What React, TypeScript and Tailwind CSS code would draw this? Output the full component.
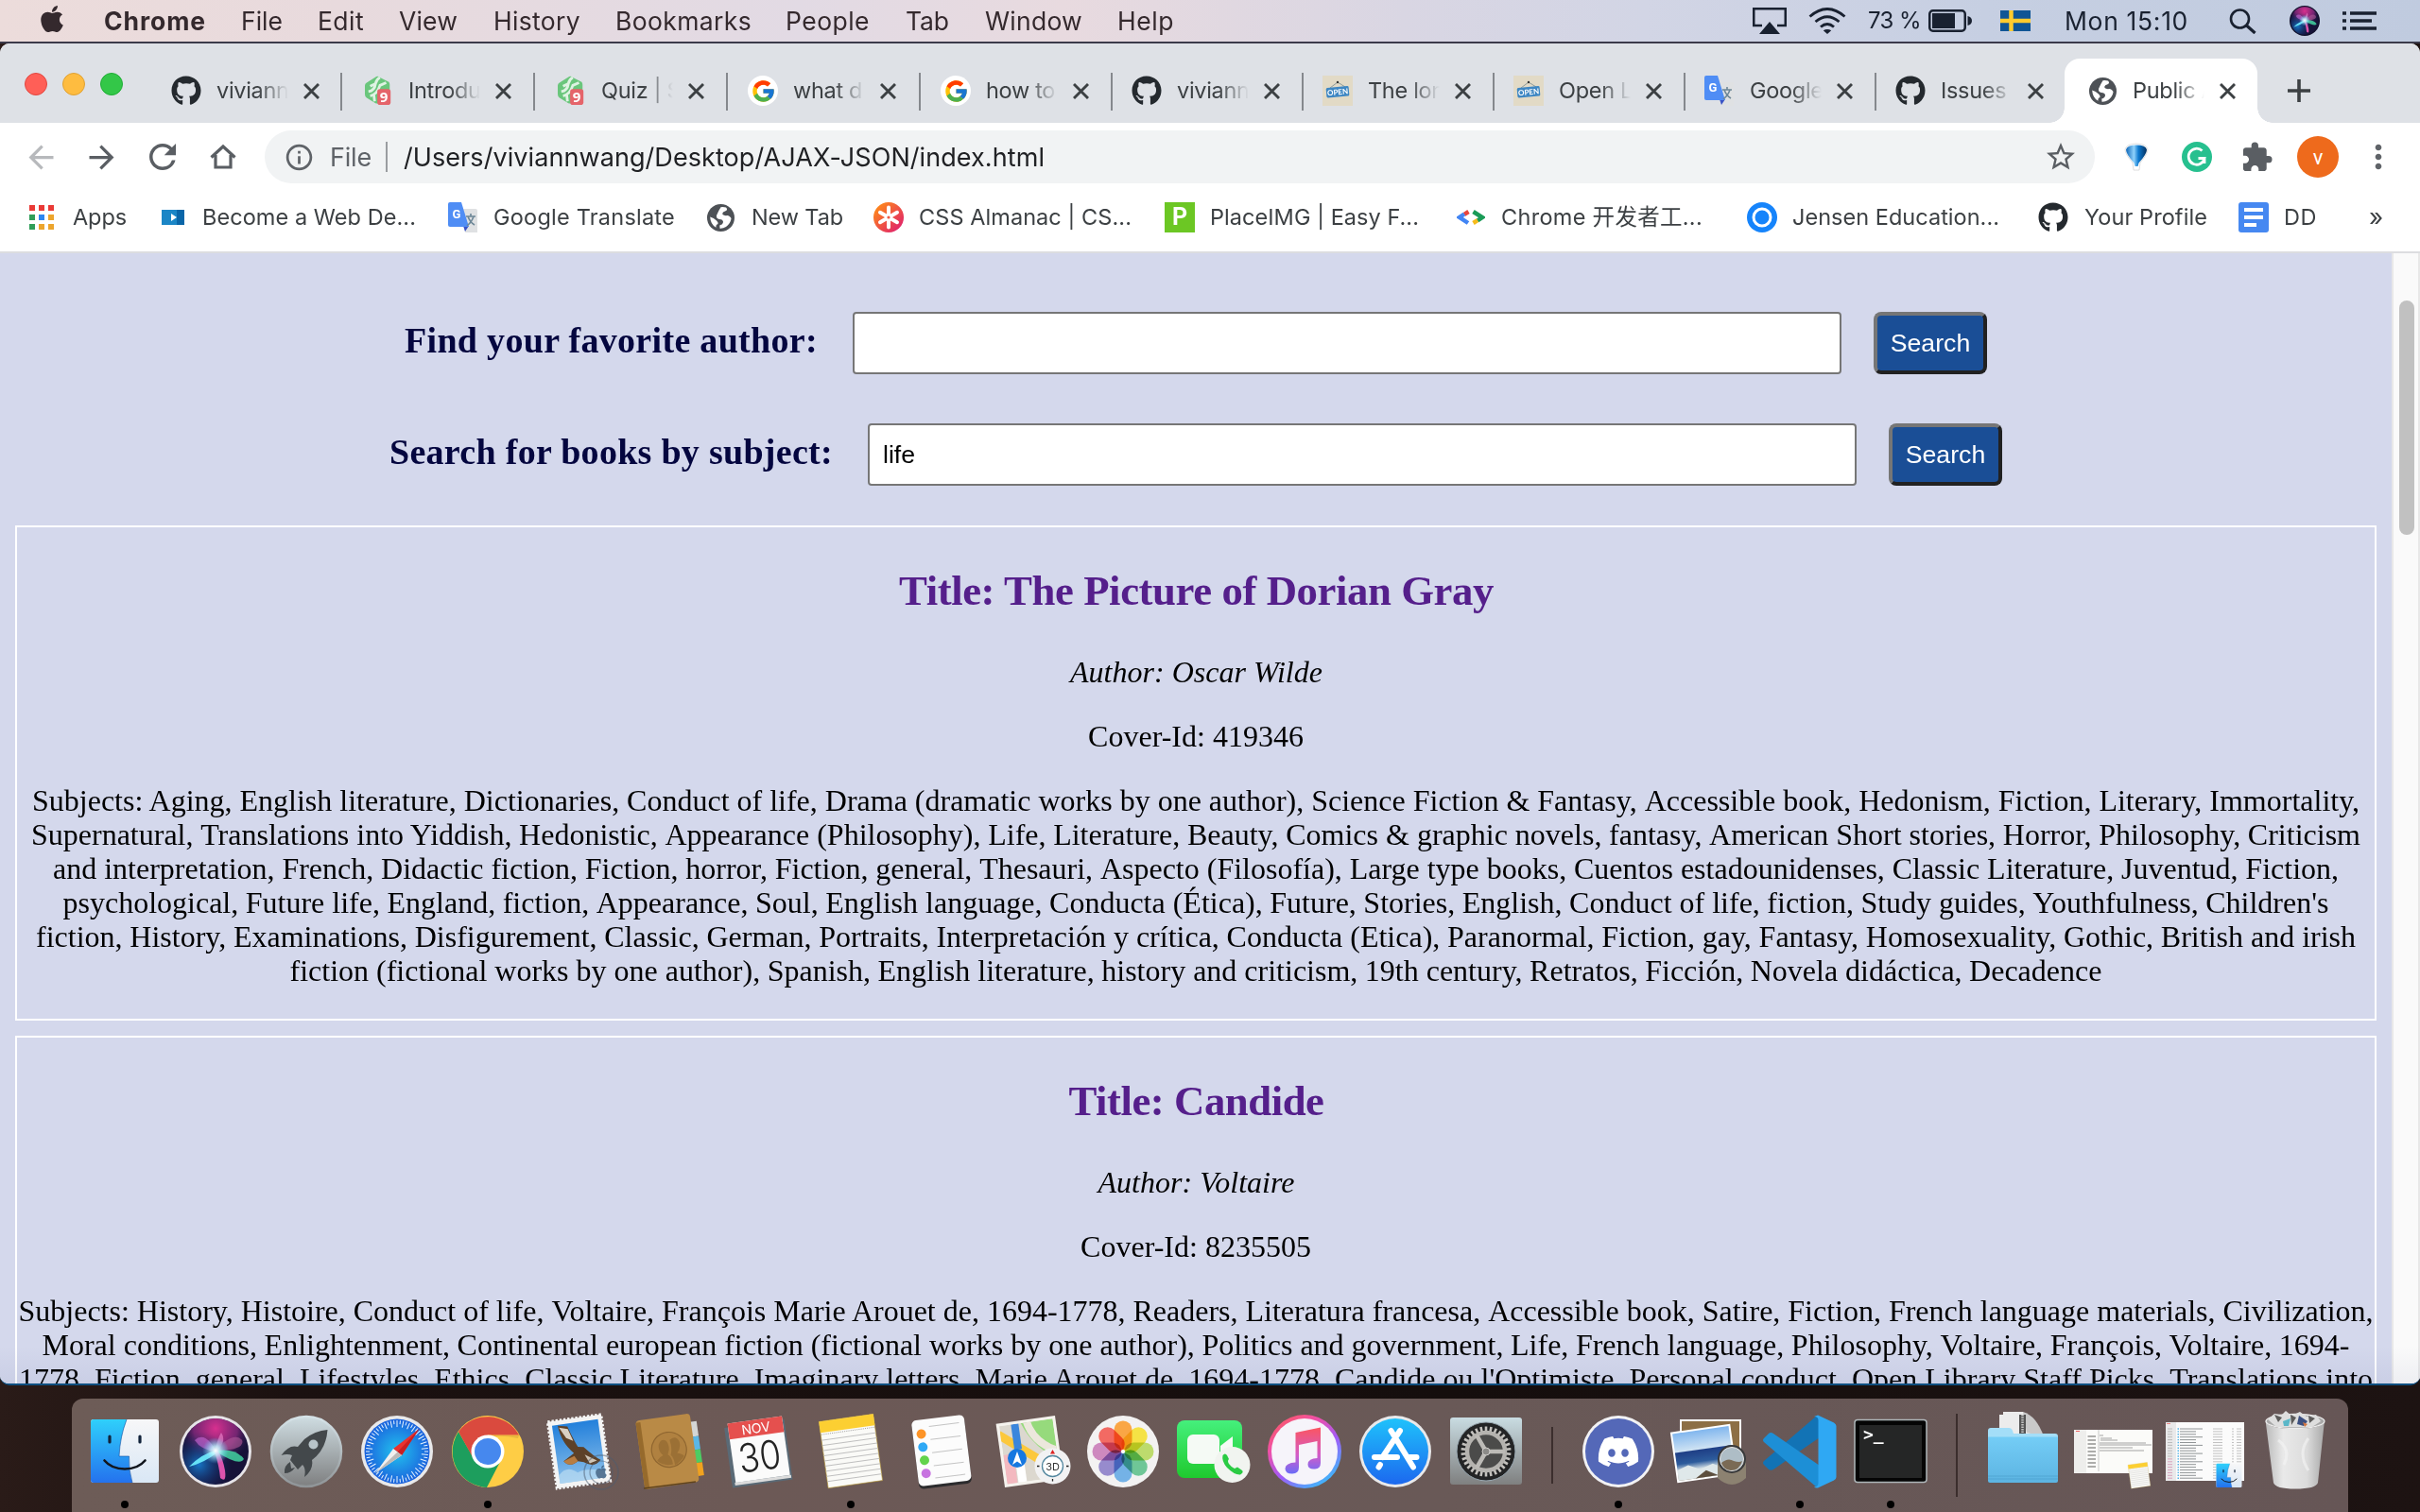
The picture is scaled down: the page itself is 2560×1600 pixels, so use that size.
import React, { useLayoutEffect, useRef } from "react";
import { FaApple, FaDiscord, FaGithub } from "react-icons/fa";
import { FcGoogle } from "react-icons/fc";
import {
  MdArrowBack,
  MdArrowForward,
  MdExtension,
  MdInfoOutline,
  MdMoreVert,
  MdRefresh,
  MdStarBorder,
} from "react-icons/md";

/* Text whose tracking adapts so that it fills the width of its box. */
function Fit({ className = "", children }: { className?: string; children: string }) {
  const outer = useRef<HTMLSpanElement>(null);
  const inner = useRef<HTMLSpanElement>(null);
  useLayoutEffect(() => {
    const o = outer.current;
    const i = inner.current;
    if (!o || !i) return;
    i.style.letterSpacing = "0px";
    const room = o.getBoundingClientRect().width + 1 - i.getBoundingClientRect().width;
    i.style.letterSpacing = `${room / children.length}px`;
  }, [children]);
  return (
    <span ref={outer} className={`block shrink-0 whitespace-nowrap ${className}`}>
      <span ref={inner} className="inline-block">
        {children}
      </span>
    </span>
  );
}

/* One justified line of subjects; only the spaces after commas stretch. */
function SubjectLine({ className, text }: { className: string; text: string }) {
  const outer = useRef<HTMLDivElement>(null);
  const inner = useRef<HTMLSpanElement>(null);
  const parts = text.split(", ");
  useLayoutEffect(() => {
    const o = outer.current;
    const i = inner.current;
    if (!o || !i) return;
    const gaps = i.querySelectorAll<HTMLElement>("[data-gap]");
    let spacing = -1;
    for (let pass = 0; pass < 3; pass++) {
      gaps.forEach((g) => (g.style.wordSpacing = `${spacing}px`));
      const room = o.getBoundingClientRect().width - i.getBoundingClientRect().width;
      spacing += room / gaps.length;
    }
    gaps.forEach((g) => (g.style.wordSpacing = `${spacing}px`));
  }, [text]);
  return (
    <div ref={outer} className={`mx-auto h-9 whitespace-nowrap text-left ${className}`}>
      <span ref={inner} className="inline-block">
        {parts.map((p, k) => (
          <React.Fragment key={k}>
            {p}
            {k < parts.length - 1 && (
              <>
                ,<span data-gap="">{" "}</span>
              </>
            )}
          </React.Fragment>
        ))}
      </span>
    </div>
  );
}

/* ---------- small icons ---------- */

const OctoIcon = () => <FaGithub className="size-8 text-[#24292e]" />;
const GoogleIcon = () => (
  <span className="flex size-8 items-center justify-center rounded-full bg-white">
    <FcGoogle className="size-[27px]" />
  </span>
);
const GlobeIcon = () => (
  <svg viewBox="0 0 29 29" className="size-[29px]">
    <circle cx="14.500" cy="14.500" r="14.500" fill="#4d5156" />
    <path
      d="M20 3.500 Q22.500 6 19 7.500 Q15.500 8.500 16.500 11 Q18 12.500 21.500 12 Q25 13 25.500 15.500 Q24.500 21 20 24 Q17 26 13.500 25.800 L13.300 22.500 Q17 21.500 17 18.500 Q16.500 16 13 16 Q9.500 15.500 10 12 Q12 7 14.500 3.200 Q17 2.800 20 3.500Z"
      fill="#fff"
    />
    <path d="M3.200 13.500 Q7 14.500 10 17.500 Q12 19 11.500 21 Q9 21.500 9.500 24.700 Q3.500 21.500 3.200 13.500Z" fill="#fff" />
  </svg>
);

const TreehouseIcon = () => (
  <svg viewBox="0 0 32 32" className="ml-0.5 size-8">
    <path d="M13 0 Q15 -1 17 1 L27 6 Q28 7 28 9 V22 L16 30 Q14 31 12 30 L2 24 Q0 23 0 20 V10 Q0 8 2 7Z" fill="#6ac67c" />
    <path d="M4 17 Q11 16 12 8 Q13 3 17 1 M6 22 Q14 20 17 10 L24 7 M12 8 L6 11 M10 20 L11 28" stroke="#dff3e3" strokeWidth="3" fill="none" />
    <rect x="14" y="14" width="15" height="18" rx="3" fill="#e5646a" />
    <text x="21.5" y="28.500" fontSize="16" fontWeight="700" fill="#fff" textAnchor="middle" fontFamily="Open Sans, sans-serif">9</text>
  </svg>
);

const OpenIcon = () => (
  <svg viewBox="0 0 32 32" className="size-8">
    <rect width="32" height="32" fill="#e2dac6" />
    <path d="M8 13 L16 7 L24 12" stroke="#8b9a9a" fill="none" />
    <circle cx="16" cy="7" r="1.2" fill="#333" />
    <g transform="rotate(-5 16 17)">
      <rect x="4" y="12" width="24" height="10.5" rx="1.5" fill="#3e87c3" />
      <text x="16" y="20.3" fontSize="8" fontWeight="700" fill="#fff" textAnchor="middle" fontFamily="Lato, sans-serif">OPEN</text>
    </g>
  </svg>
);

const TranslateIcon = () => (
  <svg viewBox="0 0 32 32" className="size-8">
    <path d="M14 7 H29 Q31 7 31 9 V32 H18Z" fill="#dfe1e3" />
    <path d="M16 25 H22 L18 31Z" fill="#3a53c5" />
    <path d="M2 0 H14 L22 26 H2 Q0 26 0 24 V2 Q0 0 2 0Z" fill="#4f8df5" />
    <text x="9" y="17" fontSize="13" fontWeight="700" fill="#fff" textAnchor="middle" fontFamily="Roboto, sans-serif">G</text>
    <path d="M19 15 H29 M24 12 V15 M21 15 Q23 21 28 24 M27 15 Q25 21 20 25" stroke="#6d8797" strokeWidth="1.6" fill="none" />
  </svg>
);

const AppsIcon = () => (
  <div className="grid size-[26px] grid-cols-3 grid-rows-3 gap-1">
    <i className="bg-[#ea3a36]" /><i className="bg-[#ea3a36]" /><i className="bg-[#ea3a36]" />
    <i className="bg-[#2f9e58]" /><i className="bg-[#2d86f0]" /><i className="bg-[#eca52d]" />
    <i className="bg-[#2f9e58]" /><i className="bg-[#eca52d]" /><i className="bg-[#eca52d]" />
  </div>
);

const WebDevIcon = () => (
  <svg viewBox="0 0 24 16" className="h-4 w-6">
    <rect width="24" height="16" fill="#0a66a8" />
    <rect width="16" height="16" fill="#1b86c6" />
    <path d="M10 4 L16 8 L10 12Z" fill="#fff" />
  </svg>
);

const AlmanacIcon = () => (
  <svg viewBox="0 0 32 32" className="size-8">
    <defs>
      <linearGradient id="alm" x1="0" y1="0" x2="1" y2="1">
        <stop offset="0.1" stopColor="#ff8a18" />
        <stop offset="0.9" stopColor="#e0226c" />
      </linearGradient>
    </defs>
    <circle cx="16" cy="16" r="16" fill="url(#alm)" />
    <path d="M16 5.500 V26.500 M7 10.800 L25 21.200 M25 10.800 L7 21.200" stroke="#fff" strokeWidth="4" strokeLinecap="round" />
    <circle cx="16" cy="16" r="1.600" fill="#ef5a44" />
  </svg>
);

const PlaceIcon = () => (
  <div className="flex size-8 items-center justify-center bg-[#6cc724] font-[Roboto] text-[25px] font-bold leading-8 text-white">P</div>
);

const DevtoolsIcon = () => (
  <svg viewBox="0 0 30 16" className="h-4 w-[30px]">
    <path d="M12.500 2 L8 4.800" stroke="#e8453c" strokeWidth="4.500" />
    <path d="M8 4.500 L3 8 L12 14" fill="none" stroke="#4285f4" strokeWidth="4.500" />
    <path d="M17.500 2 L27 8 L22 11.500" fill="none" stroke="#1a9b57" strokeWidth="4.500" />
    <path d="M22 11.200 L17.500 14" stroke="#f5bb1b" strokeWidth="4.500" />
  </svg>
);

const RingIcon = () => (
  <svg viewBox="0 0 32 32" className="size-8">
    <circle cx="16" cy="16" r="16" fill="#1684fb" />
    <circle cx="16" cy="16" r="9" fill="none" stroke="#fff" strokeWidth="3" />
  </svg>
);

const DocIcon = () => (
  <svg viewBox="0 0 32 32" className="size-8">
    <rect width="32" height="32" rx="3" fill="#4688f1" />
    <path d="M6 8 H26 M6 16 H26 M6 24 H19" stroke="#fff" strokeWidth="4" />
  </svg>
);

const SiriArt = ({ id }: { id: string }) => (
  <>
    <defs>
      <radialGradient id={`${id}a`} cx="0.5" cy="0.15" r="0.55">
        <stop offset="0" stopColor="#d8308f" />
        <stop offset="0.6" stopColor="#8b2a80" stopOpacity="0.8" />
        <stop offset="1" stopColor="#2a1a50" stopOpacity="0" />
      </radialGradient>
      <radialGradient id={`${id}b`} cx="0.25" cy="0.7" r="0.5">
        <stop offset="0" stopColor="#1673c4" />
        <stop offset="1" stopColor="#14205a" stopOpacity="0" />
      </radialGradient>
      <radialGradient id={`${id}c`}>
        <stop offset="0" stopColor="#fff" />
        <stop offset="0.35" stopColor="#bff6ff" stopOpacity="0.8" />
        <stop offset="1" stopColor="#5ad0ff" stopOpacity="0" />
      </radialGradient>
    </defs>
    <circle cx="48" cy="48" r="35" fill="#161238" />
    <circle cx="48" cy="48" r="35" fill={`url(#${id}a)`} />
    <circle cx="48" cy="48" r="35" fill={`url(#${id}b)`} />
    <path d="M48 46 Q36 26 26 36 Q32 46 48 48Z" fill="#d46fe0" opacity="0.55" />
    <path d="M48 46 Q50 34 54 28 Q60 36 50 48Z" fill="#f08ad0" opacity="0.6" />
    <path d="M48 46 Q68 26 76 36 Q80 46 48 48Z" fill="#b05a9a" opacity="0.6" />
    <path d="M48 47 Q34 50 20 64 Q36 60 50 49Z" fill="#6ff0ff" opacity="0.9" />
    <path d="M48 47 Q70 44 78 56 Q74 64 50 49Z" fill="#45e0a8" opacity="0.8" />
    <path d="M47 48 Q52 64 53 76 Q60 82 58 68 Q56 56 50 46Z" fill="#f25ab8" opacity="0.9" />
    <circle cx="48" cy="47" r="14" fill={`url(#${id}c)`} />
  </>
);

/* ---------- menu bar ---------- */

function MenuBar() {
  return (
    <div className="flex h-11 items-center bg-[linear-gradient(90deg,#ecdcdb_0%,#e8dadd_14%,#e2dae4_33%,#e8dadf_44%,#d9d6e3_58%,#d2d5e5_68%,#c6cfe2_82%,#c0cbdf_100%)] text-[26.500px] leading-[44px] text-[#34292d]">
      <FaApple className="mb-1 ml-[40px] h-8 w-[30px] shrink-0" />
      <Fit className="ml-[40px] w-[107px] font-bold">Chrome</Fit>
      <Fit className="ml-[38px] w-[43px]">File</Fit>
      <Fit className="ml-[38px] w-[48px]">Edit</Fit>
      <Fit className="ml-[38px] w-[61px]">View</Fit>
      <Fit className="ml-[39px] w-[91px]">History</Fit>
      <Fit className="ml-[38px] w-[143px]">Bookmarks</Fit>
      <Fit className="ml-[37px] w-[88px]">People</Fit>
      <Fit className="ml-[39px] w-[45px]">Tab</Fit>
      <Fit className="ml-[39px] w-[102px]">Window</Fit>
      <Fit className="ml-[38px] w-[59px]">Help</Fit>
      <div className="ml-auto flex h-full shrink-0 items-center pr-[46px] text-[#192130]">
        <svg viewBox="0 0 36 28" className="h-7 w-9">
          <path d="M10 19 H1.250 V1.250 H34.750 V19 H26" fill="none" stroke="currentColor" strokeWidth="2.500" />
          <path d="M18 15 L29 28 H7Z" fill="currentColor" />
        </svg>
        <svg viewBox="0 0 40 28" className="ml-[23px] h-7 w-10" fill="none" stroke="currentColor" strokeWidth="2.900">
          <path d="M1.500 9.500 Q20 -6.500 38.500 9.500" />
          <path d="M7.500 15 Q20 4.500 32.500 15" />
          <path d="M13 20.500 Q20 14.500 27 20.500" />
          <path d="M20 28 L15.800 24.300 Q20 21.600 24.200 24.300Z" fill="currentColor" stroke="none" />
        </svg>
        <Fit className="ml-[23px] w-[55px] text-[24px]">73 %</Fit>
        <svg viewBox="0 0 46 24" className="ml-[9px] h-6 w-[46px]">
          <rect x="1.250" y="1.250" width="37.500" height="21.500" rx="3.500" fill="none" stroke="currentColor" strokeWidth="2.500" />
          <rect x="4" y="4" width="24" height="16" fill="currentColor" />
          <path d="M41.500 7 Q46 8 46 12 Q46 16 41.500 17Z" fill="currentColor" />
        </svg>
        <svg viewBox="0 0 32 22" className="ml-[30px] h-[22px] w-8">
          <rect width="32" height="22" fill="#0f5595" />
          <path d="M11.500 0 V22 M0 11 H32" stroke="#fecb2e" strokeWidth="4.500" />
        </svg>
        <Fit className="ml-[36px] w-[130px]">Mon 15:10</Fit>
        <svg viewBox="0 0 29 27" className="ml-[44px] h-[27px] w-[29px]" fill="none" stroke="currentColor" strokeWidth="2.600">
          <circle cx="11.500" cy="11" r="9.500" />
          <path d="M18 17.500 L27.500 26" strokeWidth="3.200" />
        </svg>
        <svg viewBox="10 10 76 76" className="ml-[35px] size-8">
          <circle cx="48" cy="48" r="38" fill="#10102a" />
          <SiriArt id="sm" />
        </svg>
        <svg viewBox="0 0 36 20" className="ml-[24px] h-5 w-9" stroke="currentColor" strokeWidth="3.600">
          <path d="M0 2 H4 M8 2 H36 M0 10 H4 M8 10 H31 M0 18 H4 M8 18 H36" />
        </svg>
      </div>
    </div>
  );
}

/* ---------- browser chrome ---------- */

const CloseX = () => (
  <svg viewBox="0 0 17 17" className="size-[17px] shrink-0" stroke="#3c4043" strokeWidth="2.900">
    <path d="M1 1 L16 16 M16 1 L1 16" />
  </svg>
);

function TabContent({ icon, label }: { icon: React.ReactNode; label: string }) {
  return (
    <>
      <span className="flex w-8 shrink-0 justify-center">{icon}</span>
      <span className="ml-4 w-[76px] shrink-0 overflow-hidden whitespace-nowrap tracking-[-0.300px] [mask-image:linear-gradient(to_right,black_58%,transparent)]">
        {label}
      </span>
      <span className="ml-[16px]">
        <CloseX />
      </span>
    </>
  );
}

const tabs: { icon: React.ReactNode; label: string; w: string }[] = [
  { icon: <OctoIcon />, label: "vivianna", w: "w-[205px] pl-[24px]" },
  { icon: <TreehouseIcon />, label: "Introdu", w: "w-[204px] pl-[22px]" },
  { icon: <TreehouseIcon />, label: "Quiz | S", w: "w-[204px] pl-[22px]" },
  { icon: <GoogleIcon />, label: "what d", w: "w-[204px] pl-[21px]" },
  { icon: <GoogleIcon />, label: "how to", w: "w-[203px] pl-[21px]" },
  { icon: <OctoIcon />, label: "vivianna", w: "w-[202px] pl-[20px]" },
  { icon: <OpenIcon />, label: "The lon", w: "w-[202px] pl-[20px]" },
  { icon: <OpenIcon />, label: "Open Li", w: "w-[202px] pl-[20px]" },
  { icon: <TranslateIcon />, label: "Google", w: "w-[202px] pl-[20px]" },
];

function TabStrip() {
  return (
    <div className="flex h-[84px] items-end bg-[#dee1e6] text-[23.500px] text-[#3c4043]">
      <div className="mb-[29px] ml-[26px] flex w-[131px] shrink-0 gap-4">
        <i className="size-6 rounded-full border border-[#e2463f] bg-[#ff5f57]" />
        <i className="size-6 rounded-full border border-[#dfa133] bg-[#febc40]" />
        <i className="size-6 rounded-full border border-[#1fae35] bg-[#33c748]" />
      </div>
      {tabs.map((t, i) => (
        <div key={i} className={`flex h-[68px] shrink-0 items-center ${t.w}`}>
          <TabContent icon={t.icon} label={t.label} />
          <i className="ml-auto mb-[-2px] h-10 w-0.5 bg-[#85888d]" />
        </div>
      ))}
      <div className="flex h-[68px] w-[199px] shrink-0 items-center pl-[20px]">
        <TabContent icon={<OctoIcon />} label="Issues ·" />
      </div>
      <div className="relative flex h-[68px] w-[204px] shrink-0 items-center rounded-t-2xl bg-white pl-[24px]">
        <i className="absolute -left-4 bottom-0 size-4 bg-[radial-gradient(circle_at_0_0,#dee1e6_15.500px,#fff_16px)]" />
        <i className="absolute -right-4 bottom-0 size-4 bg-[radial-gradient(circle_at_100%_0,#dee1e6_15.500px,#fff_16px)]" />
        <TabContent icon={<GlobeIcon />} label="Public A" />
      </div>
      <svg viewBox="0 0 24 24" className="mb-[22px] ml-[32px] size-6 shrink-0" stroke="#3c4043" strokeWidth="3.600">
        <path d="M12 0 V24 M0 12 H24" />
      </svg>
    </div>
  );
}

function Toolbar() {
  return (
    <div className="flex h-[72px] items-center bg-white text-[#5a5e63]">
      <MdArrowBack className="ml-[24px] size-[39px] shrink-0 text-[#b7b9bc]" />
      <MdArrowForward className="ml-[25px] size-[39px] shrink-0" />
      <MdRefresh className="ml-[24px] size-[42px] shrink-0" />
      <svg viewBox="0 0 28 28" className="ml-[29px] h-7 w-7 shrink-0" fill="none" stroke="currentColor" strokeWidth="3.200">
        <path d="M1.500 14.500 L14 3 L26.500 14.500 M6 12 V25 H22 V12" />
      </svg>
      <div className="ml-[30px] flex h-14 w-[1936px] shrink-0 items-center rounded-full bg-[#f1f3f4] text-[27px]">
        <MdInfoOutline className="ml-[20px] size-[33px] shrink-0 text-[#5f6368]" />
        <Fit className="ml-[16px] w-[43px] pt-0.5 text-[#5f6368]">File</Fit>
        <i className="ml-[16px] h-8 w-0.5 bg-[#9a9da1]" />
        <Fit className="ml-[17px] w-[677px] pt-0.5 text-[#202124]">/Users/viviannwang/Desktop/AJAX-JSON/index.html</Fit>
        <MdStarBorder className="ml-auto mr-[18px] size-[36px] shrink-0" />
      </div>
      <svg viewBox="0 0 32 32" className="ml-[28px] size-8 shrink-0">
        <defs>
          <linearGradient id="bal" x1="0" y1="0" x2="1" y2="0">
            <stop offset="0" stopColor="#0d66b8" />
            <stop offset="0.380" stopColor="#8fd2fb" />
            <stop offset="0.600" stopColor="#0d79cf" />
            <stop offset="1" stopColor="#04305f" />
          </linearGradient>
        </defs>
        <path d="M4 8 Q6 2 16 2 Q26 2 28 8 Q28 13 20 22 L19 30 H13 L12 22 Q4 13 4 8Z" fill="#fff" stroke="#d5d5d5" strokeWidth="0.800" />
        <path d="M5 8.500 Q6 3.500 16 3.500 Q26 3.500 27 8.500 Q27 13 18.500 22.500 L17.500 26 H14.500 L13.500 22.500 Q5 13 5 8.500Z" fill="url(#bal)" />
      </svg>
      <svg viewBox="0 0 32 32" className="ml-[32px] size-8 shrink-0">
        <circle cx="16" cy="16" r="16" fill="#27c08f" />
        <path d="M21.500 9.500 A8.500 8.500 0 1 0 24 17.500 H17.500 M24 17 V23" fill="none" stroke="#fff" strokeWidth="2.800" />
      </svg>
      <MdExtension className="ml-[30px] size-[35px] shrink-0" />
      <div className="ml-[25px] flex size-11 shrink-0 items-center justify-center rounded-full bg-[#ee6a1c] font-[Roboto] text-[22px] text-white">v</div>
      <MdMoreVert className="ml-[22px] size-[40px] shrink-0 text-[#5f6368]" />
    </div>
  );
}

function Bookmarks() {
  return (
    <div className="flex h-[66px] items-center border-b-2 border-[#dcdde0] bg-white pb-2 font-[Inter,'Noto_Sans_CJK_SC',sans-serif] text-[23.500px] leading-[32px] text-[#3c4043]">
      <div className="ml-[31px] flex w-[46px]"><AppsIcon /></div>
      <Fit className="w-[56px]">Apps</Fit>
      <div className="ml-[38px] w-[43px]"><WebDevIcon /></div>
      <Fit className="w-[225px]">Become a Web De...</Fit>
      <div className="ml-[35px] w-[48px]"><TranslateIcon /></div>
      <Fit className="w-[191px]">Google Translate</Fit>
      <div className="ml-[35px] w-[47px]"><GlobeIcon /></div>
      <Fit className="w-[96px]">New Tab</Fit>
      <div className="ml-[33px] w-[48px]"><AlmanacIcon /></div>
      <Fit className="w-[224px]">CSS Almanac | CS...</Fit>
      <div className="ml-[36px] w-[48px]"><PlaceIcon /></div>
      <Fit className="w-[220px]">PlaceIMG | Easy F...</Fit>
      <div className="ml-[41px] w-[47px]"><DevtoolsIcon /></div>
      <Fit className="w-[212px]">Chrome 开发者工...</Fit>
      <div className="ml-[48px] w-[48px]"><RingIcon /></div>
      <Fit className="w-[218px]">Jensen Education...</Fit>
      <div className="ml-[42px] w-[49px]"><OctoIcon /></div>
      <Fit className="w-[129px]">Your Profile</Fit>
      <div className="ml-[34px] w-[48px]"><DocIcon /></div>
      <Fit className="w-[34px]">DD</Fit>
      <span className="ml-[56px] text-[26px] leading-[28px]">»</span>
    </div>
  );
}

/* ---------- page ---------- */

const SearchButton = ({ className }: { className: string }) => (
  <button
    className={`h-[66px] w-[120px] shrink-0 rounded-[8px] border-4 border-b-[#212121] border-l-[#767676] border-r-[#212121] border-t-[#767676] bg-[#1a4e96] font-['Liberation_Sans',sans-serif] text-[26.670px] text-white ${className}`}
  >
    Search
  </button>
);

const bookA = [
  { w: "w-[2462px]", t: "Subjects: Aging, English literature, Dictionaries, Conduct of life, Drama (dramatic works by one author), Science Fiction & Fantasy, Accessible book, Hedonism, Fiction, Literary, Immortality," },
  { w: "w-[2464px]", t: "Supernatural, Translations into Yiddish, Hedonistic, Appearance (Philosophy), Life, Literature, Beauty, Comics & graphic novels, fantasy, American Short stories, Horror, Philosophy, Criticism" },
  { w: "w-[2418px]", t: "and interpretation, French, Didactic fiction, Fiction, horror, Fiction, general, Thesauri, Aspecto (Filosofía), Large type books, Cuentos estadounidenses, Classic Literature, Juventud, Fiction," },
  { w: "w-[2397px]", t: "psychological, Future life, England, fiction, Appearance, Soul, English language, Conducta (Ética), Future, Stories, English, Conduct of life, fiction, Study guides, Youthfulness, Children's" },
  { w: "w-[2454px]", t: "fiction, History, Examinations, Disfigurement, Classic, German, Portraits, Interpretación y crítica, Conducta (Etica), Paranormal, Fiction, gay, Fantasy, Homosexuality, Gothic, British and irish" },
  { w: "w-[1917px]", t: "fiction (fictional works by one author), Spanish, English literature, history and criticism, 19th century, Retratos, Ficción, Novela didáctica, Decadence" },
];

const bookB = [
  { w: "w-[2491px]", t: "Subjects: History, Histoire, Conduct of life, Voltaire, François Marie Arouet de, 1694-1778, Readers, Literatura francesa, Accessible book, Satire, Fiction, French language materials, Civilization," },
  { w: "w-[2441px]", t: "Moral conditions, Enlightenment, Continental european fiction (fictional works by one author), Politics and government, Life, French language, Philosophy, Voltaire, François, Voltaire, 1694-" },
  { w: "w-[2490px]", t: "1778, Fiction, general, Lifestyles, Ethics, Classic Literature, Imaginary letters, Marie Arouet de, 1694-1778, Candide ou l'Optimiste, Personal conduct, Open Library Staff Picks, Translations into" },
];

function Book(props: { title: string; titleW: string; author: string; authorW: string; cover: string; lines: { w: string; t: string }[] }) {
  return (
    <div className="mx-4 mb-4 border-2 border-white pb-[33px] pt-[42px] text-center text-[32px] leading-9 text-black">
      <h3 className="mb-[43px] flex h-[50px] justify-center text-[44.800px] font-bold leading-[50px] text-[#551f8b]">
        <Fit className={props.titleW}>{props.title}</Fit>
      </h3>
      <p className="mb-8 flex justify-center italic">
        <Fit className={props.authorW}>{props.author}</Fit>
      </p>
      <p className="mb-8">{props.cover}</p>
      <div className="-mx-2">
        {props.lines.map((l, i) => (
          <SubjectLine key={i} className={l.w} text={l.t} />
        ))}
      </div>
    </div>
  );
}

function Page() {
  return (
    <div className="flex h-[1196px] overflow-hidden bg-[#d4d8ec] font-['Liberation_Serif',serif]">
      <div className="w-[2530px] shrink-0">
        <div className="mt-[62px] flex h-[66px] items-center pl-[428px]">
          <Fit className="w-[436px] pb-1.5 text-[38px] font-bold text-[#04063f]">Find your favorite author:</Fit>
          <div className="ml-[38px] h-[66px] w-[1046px] rounded-[4px] border-2 border-[#767676] bg-white" />
          <SearchButton className="ml-[34px]" />
        </div>
        <div className="mt-[52px] flex h-[66px] items-center pl-[412px]">
          <Fit className="w-[468px] pb-1.5 text-[38px] font-bold text-[#04063f]">Search for books by subject:</Fit>
          <div className="ml-[38px] flex h-[66px] w-[1046px] items-center rounded-[4px] border-2 border-[#767676] bg-white pl-[14px] font-['Liberation_Sans',sans-serif] text-[26.670px] text-black">
            life
          </div>
          <SearchButton className="ml-[34px]" />
        </div>
        <div className="mt-[42px]">
          <Book title="Title: The Picture of Dorian Gray" titleW="w-[628px]" author="Author: Oscar Wilde" authorW="w-[266px]" cover="Cover-Id: 419346" lines={bookA} />
          <Book title="Title: Candide" titleW="w-[269px]" author="Author: Voltaire" authorW="w-[207px]" cover="Cover-Id: 8235505" lines={bookB} />
        </div>
      </div>
      <div className="w-[30px] shrink-0 border-l-2 border-r-2 border-[#e8e8e8] bg-[#fafafa] pl-1.5 pt-[50px]">
        <div className="h-[248px] w-4 rounded-full bg-[#c1c1c1]" />
      </div>
    </div>
  );
}

/* ---------- dock icons (96 x 96 artboard) ---------- */

const FinderArt = ({ id }: { id: string }) => (
  <>
    <defs>
      <linearGradient id={`${id}l`} x1="0" y1="0" x2="0" y2="1">
        <stop offset="0" stopColor="#2fd0fb" />
        <stop offset="1" stopColor="#2472ee" />
      </linearGradient>
      <linearGradient id={`${id}r`} x1="0" y1="0" x2="0" y2="1">
        <stop offset="0" stopColor="#f7f7f8" />
        <stop offset="1" stopColor="#d9e7f5" />
      </linearGradient>
    </defs>
    <rect x="12" y="14" width="72" height="67" rx="3" fill={`url(#${id}r)`} />
    <path d="M15 14 H50 Q43 32 42 53 H52.500 Q52 68 56 81 H15 Q12 81 12 78 V17 Q12 14 15 14Z" fill={`url(#${id}l)`} />
    <path d="M50 14 Q43 32 42 53 H52.500 Q52 68 56 81" fill="none" stroke="#0f4fa0" strokeWidth="1" opacity="0.6" />
    <path d="M32 32 V38 M64 32 V38" stroke="#12233a" strokeWidth="3.200" strokeLinecap="round" />
    <path d="M26.500 57.500 Q34 66.500 48 66.500 Q62 66.500 69.500 57.500" fill="none" stroke="#12161d" strokeWidth="2.600" strokeLinecap="round" />
  </>
);

const NotesArt = () => (
  <g transform="rotate(-8 48 48)">
    <rect x="19" y="12" width="58" height="71" fill="#fafaf7" stroke="#b5952f" strokeWidth="0.600" />
    <rect x="19" y="12" width="58" height="12" fill="#fccf32" />
    <path d="M20 26 H76" stroke="#999" strokeWidth="0.900" strokeDasharray="1 1.200" />
    <path d="M19 32 H77 M19 37.500 H77 M19 43 H77 M19 48.500 H77 M19 54 H77 M19 59.500 H77 M19 65 H77 M19 70.500 H77 M19 76 H77" stroke="#bcbcbc" strokeWidth="0.900" />
  </g>
);

const Art = ({ children }: { children: React.ReactNode }) => (
  <svg viewBox="0 0 96 96" className="size-24">
    {children}
  </svg>
);

const ring = Array.from({ length: 60 }, (_, i) => i * 6);
const teeth = Array.from({ length: 30 }, (_, i) => i * 12);

const Launchpad = () => (
  <Art>
    <defs>
      <linearGradient id="lp" x1="0" y1="0" x2="0" y2="1">
        <stop offset="0" stopColor="#cfdde2" />
        <stop offset="1" stopColor="#7e7f80" />
      </linearGradient>
      <linearGradient id="lpr" x1="0" y1="0" x2="0" y2="1">
        <stop offset="0" stopColor="#d6e3e8" />
        <stop offset="1" stopColor="#8f9497" />
      </linearGradient>
    </defs>
    <circle cx="48" cy="48" r="37" fill="url(#lp)" stroke="url(#lpr)" strokeWidth="2.500" />
    <path d="M70.500 25 Q57 26 46 35 L39 43 Q30 40 21.500 52 Q28 50 33 52 L31 57 L39 67 L44 62 Q48 66 46 75 Q56 67 54 57 Q69 46 70.500 25Z" fill="#43484b" />
    <path d="M31 59 Q24 63 25 71 Q32 71 36 65 L32 66Z" fill="#43484b" />
    <circle cx="55.500" cy="40.500" r="5" fill="#b8c4c9" />
  </Art>
);

const Safari = () => (
  <Art>
    <defs>
      <radialGradient id="sf">
        <stop offset="0" stopColor="#22c3ee" />
        <stop offset="1" stopColor="#1b62dd" />
      </radialGradient>
    </defs>
    <circle cx="48" cy="48" r="38" fill="#e9e9ea" />
    <circle cx="48" cy="48" r="34.500" fill="url(#sf)" />
    {ring.map((a, i) => (
      <path key={a} d={i % 2 ? "M48 15 V19" : "M48 15 V22"} stroke="#e9f5ff" strokeWidth="1" transform={`rotate(${a} 48 48)`} />
    ))}
    <path d="M71.500 24 L53 52 L44 45Z" fill="#e9322f" />
    <path d="M71.500 24 L53 52 L48.500 48.500Z" fill="#c91f20" />
    <path d="M25 71 L44 45 L53 52Z" fill="#f1f0ef" />
    <path d="M25 71 L48.500 48.500 L53 52Z" fill="#bdbab8" />
  </Art>
);

const ChromeIcon = () => (
  <Art>
    <circle cx="48" cy="48" r="38" fill="#fecd45" />
    <path d="M48 48 L17 27 A38 38 0 0 1 81 30.500 H48Z" fill="#da4a3e" />
    <path d="M17 27 A38 38 0 0 0 47 86 L62 57 L34 57Z" fill="#1d9e5d" />
    <path d="M17 27 L32 54 L44 40 H48 V31 H30Z" fill="#da4a3e" />
    <path d="M48 31 H81 L80 34 Q66 31 55 32Z" fill="#d9a93a" opacity="0.600" />
    <circle cx="48" cy="48" r="17.500" fill="#fff" />
    <circle cx="48" cy="48" r="14" fill="#4688ee" />
  </Art>
);

const Mail = () => (
  <Art>
    <defs>
      <linearGradient id="sky" x1="0" y1="0" x2="0" y2="1">
        <stop offset="0" stopColor="#2380db" />
        <stop offset="1" stopColor="#8cc0ea" />
      </linearGradient>
    </defs>
    <g transform="rotate(-8 48 48)">
      <rect x="20" y="12.500" width="57" height="71" fill="#f4f4f4" stroke="#f4f4f4" strokeWidth="3" strokeDasharray="2.400 1.800" />
      <rect x="24" y="17" width="49" height="62" fill="url(#sky)" />
      <path d="M24 70 Q34 60 44 70 Q54 66 73 72 V79 H24Z" fill="#b9dcf2" opacity="0.700" />
      <path d="M30 18 L40 20 Q44 34 48 43 L54 44 Q64 56 70 60 Q62 68 52 60 L46 58 Q36 64 31 56 L43 49 Q31 36 30 18Z" fill="#5d4128" />
      <path d="M31 20 L40 23 L44 36 L37 32Z" fill="#d8d0c4" />
      <path d="M31 56 Q36 64 46 58 L43 52Z" fill="#b87d42" />
      <path d="M54 52 L66 60 L58 62Z" fill="#cfc5b7" />
    </g>
    <circle cx="72" cy="70" r="18" fill="none" stroke="#4c5b70" strokeWidth="1.500" opacity="0.500" />
    <circle cx="72" cy="70" r="12" fill="none" stroke="#4c5b70" strokeWidth="1.200" opacity="0.500" />
    <g transform="translate(64 61.500)" opacity="0.700">
      <FaApple size={16} color="#34506f" />
    </g>
  </Art>
);

const Contacts = () => (
  <Art>
    <g transform="rotate(-8 48 48)">
      <rect x="70" y="20" width="11" height="16" fill="#d4d6d6" />
      <rect x="70" y="36" width="11" height="14" fill="#5ab7e6" />
      <rect x="70" y="50" width="11" height="14" fill="#4dcc63" />
      <rect x="70" y="64" width="11" height="14" fill="#f0a21f" />
      <rect x="17" y="11" width="58" height="73" rx="4" fill="#b98a46" />
      <path d="M17 13 H22 V84 H19 Q17 84 17 82Z" fill="#966a2c" />
      <circle cx="48" cy="46" r="18.500" fill="#b08140" stroke="#8f6630" strokeWidth="1.200" />
      <path d="M34 56 Q37 52 41 51 Q36 46 38 39 Q41 33 46 36 Q49 40 48 46 L46 51 Q50 54 50 62 Q40 63 34 56Z M50 36 Q57 31 60 39 Q61 46 56 51 Q61 52 63 55 Q58 61 52 63 Q52 55 49 52 Q52 44 50 36Z" fill="#9b7035" />
    </g>
    <path d="M21 87 L76 80" stroke="#5f431d" strokeWidth="1.500" />
  </Art>
);

const Calendar = () => (
  <Art>
    <g transform="rotate(-8 48 48)">
      <rect x="14" y="18" width="64" height="64" fill="#5a6a76" />
      <rect x="17" y="77" width="60" height="3" fill="#dcdcdc" />
      <rect x="18" y="14" width="58" height="63" fill="#fbfbfb" />
      <rect x="18" y="14" width="58" height="17" fill="#e5504e" />
      <text x="47" y="28" fontSize="14" fill="#fff" textAnchor="middle" fontFamily="Inter, sans-serif">NOV</text>
      <text x="47" y="68" fontSize="42" fontWeight="300" fill="#232323" textAnchor="middle" textLength="45" lengthAdjust="spacingAndGlyphs" fontFamily="Inter, sans-serif">30</text>
    </g>
  </Art>
);

const Reminders = () => (
  <Art>
    <g transform="rotate(-7 48 48)">
      <rect x="20" y="14" width="56" height="71" rx="5" fill="#2b2b2d" />
      <rect x="20" y="12" width="56" height="70" rx="5" fill="#fcfcfc" />
      <circle cx="29" cy="27" r="5" fill="#fd9427" />
      <circle cx="29" cy="41" r="5" fill="#2fa9f5" />
      <circle cx="29" cy="55" r="5" fill="#62d34c" />
      <circle cx="29" cy="69" r="5" fill="#c774e0" />
      <path d="M38 20 H70 M38 34 H70 M38 48 H70 M38 62 H70 M38 75 H70" stroke="#c4c4c4" strokeWidth="1" />
    </g>
  </Art>
);

const Maps = () => (
  <Art>
    <defs>
      <clipPath id="mp">
        <rect x="17" y="17" width="57" height="62" />
      </clipPath>
    </defs>
    <g transform="rotate(-8 45 48)">
      <rect x="14" y="14" width="63" height="68" fill="#f5f3ee" />
      <g clipPath="url(#mp)">
        <rect x="17" y="17" width="57" height="62" fill="#dcd8cf" />
        <path d="M17 48 H28 V80 H17Z" fill="#f3b9c0" />
        <path d="M40 17 H74 V60 Q50 45 40 17Z" fill="#96da7c" />
        <path d="M46 15 Q50 40 76 52" stroke="#ece7dc" strokeWidth="8" fill="none" />
        <path d="M15 26 L74 74" stroke="#fcc83c" strokeWidth="9" />
        <path d="M33.500 17 V44" stroke="#3a86dc" strokeWidth="8" />
        <path d="M33.500 52 V80" stroke="#fff" strokeWidth="9" />
      </g>
    </g>
    <circle cx="32" cy="55" r="10" fill="#1678e0" />
    <path d="M32 48 L37 62 L32 58.500 L27 62Z" fill="#fff" />
    <circle cx="69.500" cy="63.500" r="19" fill="#f2f2f3" />
    <circle cx="69.500" cy="63.500" r="11" fill="#fff" stroke="#53879f" strokeWidth="1.300" />
    <text x="69.500" y="67.500" fontSize="11" fill="#333" textAnchor="middle" fontFamily="Inter, sans-serif">3D</text>
    <path d="M69.500 46 L72 50.500 H67Z" fill="#d22" />
    <path d="M53 63.500 H55.500 M84 63.500 H86.500 M69.500 77 V79.500" stroke="#222" strokeWidth="1.300" />
  </Art>
);

const petals = ["#fb9b2c", "#f5e02c", "#b5d85a", "#5cc08a", "#62a9e4", "#8a7cc8", "#c97ab8", "#f2564e"];
const Photos = () => (
  <Art>
    <circle cx="48" cy="48" r="38" fill="#f3f2f2" />
    <g className="isolate">
      {petals.map((c, i) => (
        <rect key={c} x="38.500" y="15.500" width="19" height="31" rx="9.500" fill={c} opacity="0.880" className="mix-blend-multiply" transform={`rotate(${i * 45} 48 48)`} />
      ))}
    </g>
    <circle cx="48" cy="48" r="2" fill="#fff" />
  </Art>
);

const FaceTime = () => (
  <Art>
    <defs>
      <linearGradient id="ft" x1="0" y1="0" x2="0" y2="1">
        <stop offset="0" stopColor="#45f07c" />
        <stop offset="1" stopColor="#1fc92e" />
      </linearGradient>
    </defs>
    <rect x="9" y="15" width="69" height="61" rx="8" fill="url(#ft)" />
    <rect x="20" y="30" width="34" height="31" rx="6" fill="#f5faf5" />
    <path d="M55 42 L68 32 V58 L55 49Z" fill="#f5faf5" />
    <circle cx="67.500" cy="62" r="19" fill="#f1f4f0" />
    <path d="M57.500 52 Q60 49 62 52 L64 56 Q62 58 64 61 Q66 64 70 66 L73 64.500 L78 68 Q80 70 76 72.500 Q70 73 62 65 Q56 58 57.500 52Z" fill="#2acb43" />
  </Art>
);

const Music = () => (
  <Art>
    <defs>
      <linearGradient id="mu" x1="0.100" y1="0" x2="0.800" y2="1">
        <stop offset="0" stopColor="#fb5a5a" />
        <stop offset="0.300" stopColor="#f050a8" />
        <stop offset="0.600" stopColor="#a35af8" />
        <stop offset="1" stopColor="#2ec5fb" />
      </linearGradient>
      <linearGradient id="mn" x1="0" y1="0" x2="0" y2="1">
        <stop offset="0" stopColor="#fb5560" />
        <stop offset="0.600" stopColor="#d35cc8" />
        <stop offset="1" stopColor="#6a6cf8" />
      </linearGradient>
    </defs>
    <circle cx="48" cy="48" r="39" fill="url(#mu)" />
    <circle cx="48" cy="48" r="35" fill="#f6f4fa" />
    <path d="M38.500 28 L65 22.500 V60 Q65 66 59 66.500 Q51.500 67 51.500 61.500 Q52 55 61.500 55 V37 L42 41 V65 Q42 71 35 71.500 Q27.500 71.500 27.500 66 Q28 60 38.500 59.500Z" fill="url(#mn)" />
  </Art>
);

const AppStore = () => (
  <Art>
    <defs>
      <linearGradient id="as" x1="0" y1="0" x2="0" y2="1">
        <stop offset="0" stopColor="#1fc2fb" />
        <stop offset="1" stopColor="#1c68ef" />
      </linearGradient>
    </defs>
    <circle cx="48" cy="48" r="38" fill="#e9e9ea" />
    <circle cx="48" cy="48" r="35" fill="url(#as)" />
    <g stroke="#fff" strokeWidth="6" strokeLinecap="round" fill="none">
      <path d="M53 26 L34.500 54 M43.500 26 L67 64.500 M26 54 H50 M61 54 H70.500 M32 62 L30.500 64.500" />
    </g>
  </Art>
);

const Prefs = () => (
  <Art>
    <defs>
      <linearGradient id="pf" x1="0" y1="0" x2="0" y2="1">
        <stop offset="0" stopColor="#c9dce2" />
        <stop offset="1" stopColor="#7f8080" />
      </linearGradient>
    </defs>
    <rect x="10" y="12" width="76" height="71" rx="3" fill="url(#pf)" />
    <circle cx="48" cy="48" r="31" fill="#232425" stroke="#9aa9b2" strokeWidth="1" />
    {teeth.map((a) => (
      <path key={a} d="M48 21.500 V27" stroke="#c4c2be" strokeWidth="2.600" transform={`rotate(${a} 48 48)`} />
    ))}
    <circle cx="48" cy="48" r="20" fill="#4b4b4a" stroke="#b5b3af" strokeWidth="4.500" />
    <path d="M48 48 H68 M48 48 L38 30.700 M48 48 L38 65.300" stroke="#bcbab6" strokeWidth="4.500" />
    <circle cx="48" cy="48" r="4" fill="#8c8b88" stroke="#d0cecb" />
  </Art>
);

const Discord = () => (
  <Art>
    <circle cx="48" cy="48" r="38" fill="#f2f2f4" />
    <circle cx="48" cy="48" r="35" fill="#5468b8" />
    <FaDiscord x="25" y="25" size={46} color="#fff" />
  </Art>
);

const Preview = () => (
  <Art>
    <defs>
      <linearGradient id="pv" x1="0" y1="0" x2="0" y2="1">
        <stop offset="0" stopColor="#7db4ee" />
        <stop offset="0.400" stopColor="#cfe3f3" />
        <stop offset="0.420" stopColor="#1f3f86" />
        <stop offset="0.650" stopColor="#2d5c9c" />
        <stop offset="0.800" stopColor="#dbe5e8" />
        <stop offset="1" stopColor="#7a6850" />
      </linearGradient>
    </defs>
    <rect x="18" y="15" width="63" height="56" fill="#8d6f45" stroke="#fff" strokeWidth="2" />
    <g transform="rotate(-8 42 48)">
      <rect x="11" y="24" width="62" height="52" fill="url(#pv)" stroke="#fff" strokeWidth="2" />
      <path d="M12 64 L24 60 L36 66 L50 62 L60 68 L58 75 H12Z" fill="#dfe8ea" />
      <path d="M30 75 L42 68 L54 75Z" fill="#5d4f3e" />
    </g>
    <path d="M57 56 V76 Q72 90 87 76 V56Z" fill="#8c8271" />
    <circle cx="72" cy="56" r="15" fill="#393a3b" />
    <circle cx="72" cy="56" r="12.500" fill="#aebdc6" stroke="#e5e5e5" />
    <path d="M61 60 Q68 54 74 58 Q80 60 83 58 Q80 68 71 68 Q63 67 61 60Z" fill="#7a6a55" />
  </Art>
);

const VSCode = () => (
  <Art>
    <path d="M10 62 Q8 60 10 58 L66 10 L69 11 V33 L20 67 Q17 68.500 15 67Z" fill="#1273b5" />
    <path d="M10 34 Q8 36 10 38 L66 86 L69 84 V63 L20 29 Q17 27 15 29Z" fill="#1d8fd6" />
    <path d="M67 9.500 L84 17.500 Q86.500 19 86.500 21 V75 Q86.500 77 84 78.500 L67 86.500 Q64 87 63 85 Q67.500 86 67.500 81 V15 Q67.500 11 63 11Z" fill="#2fa8f3" />
  </Art>
);

const Terminal = () => (
  <Art>
    <rect x="10" y="14.500" width="76" height="66" rx="3" fill="#050505" stroke="#aeb6b9" strokeWidth="1.500" />
    <rect x="15" y="20" width="66" height="56" fill="#252626" />
    <text x="19" y="36" fontSize="18" fontWeight="700" fill="#fff" fontFamily="DejaVu Sans Mono, monospace">&gt;_</text>
  </Art>
);

const Folder = () => (
  <Art>
    <defs>
      <linearGradient id="fo" x1="0" y1="0" x2="0" y2="1">
        <stop offset="0" stopColor="#74cdf6" />
        <stop offset="1" stopColor="#5cb4e2" />
      </linearGradient>
    </defs>
    <path d="M27 6 H48 L70 32 H23 V9 H27Z" fill="#ececec" />
    <path d="M48 6 Q62 10 70 32 L52 28Z" fill="#c9c9c9" />
    <path d="M47.500 9 V31" stroke="#555" strokeWidth="7" />
    <path d="M47.500 9 V31" stroke="#c4c4c4" strokeWidth="2.500" strokeDasharray="1.500 1" />
    <path d="M11 26 Q11 23 14 23 H33 Q36 23 37 26 L38 29 H82 Q85 29 85 32 V40 H11Z" fill="#a4def8" />
    <path d="M11 32.500 H85 V79 Q85 81 83 81 H13 Q11 81 11 79Z" fill="url(#fo)" />
    <path d="M11 74 H85 M11 77 H85" stroke="#4a9fcc" strokeWidth="0.700" />
  </Art>
);

const rowsA = Array.from({ length: 9 }, (_, i) => 32 + i * 4);
const NotesWindow = () => (
  <Art>
    <rect x="6" y="25" width="83" height="46" fill="#fbfbf9" />
    <rect x="6" y="25" width="13" height="46" fill="#eeeeec" />
    <path d="M32 25 V69" stroke="#bbb" strokeWidth="0.800" />
    <path d="M8 26.500 H12" stroke="#e66" strokeWidth="1" />
    {rowsA.map((y) => (
      <path key={y} d={`M20.500 ${y} H29`} stroke="#8c8c8a" strokeWidth="1.400" />
    ))}
    <path d="M33 31 H37 M34 34 H46 M34 36 H52 M33 39 H82 M33 41 H88 M33 44 H68 M33 47 H80" stroke="#999" strokeWidth="0.900" />
    <svg x="58" y="56" width="34" height="35" viewBox="0 0 96 96">
      <NotesArt />
    </svg>
  </Art>
);

const rowsB = Array.from({ length: 19 }, (_, i) => 24 + i * 2.9);
const FinderWindow = () => (
  <Art>
    <rect x="7" y="17" width="83" height="62" fill="#fbfbfb" />
    <rect x="7" y="17" width="11" height="62" fill="#e9e9ea" />
    <path d="M8 18.500 H12" stroke="#e88" strokeWidth="1" />
    {rowsB.map((y, i) => (
      <React.Fragment key={y}>
        <path d={i % 3 ? `M22 ${y} H39` : `M22 ${y} H46`} stroke="#909496" strokeWidth="1" />
        <path d={`M57 ${y} H67 M77 ${y} H79 M82 ${y} H87`} stroke="#bbb" strokeWidth="0.900" />
        <path d={`M19.500 ${y} H21`} stroke="#54b4e8" strokeWidth="1.400" />
        <path d={`M9 ${y} H14`} stroke={i > 10 ? "#d59ab8" : "#b5b5b5"} strokeWidth="0.900" />
      </React.Fragment>
    ))}
    <svg x="56" y="55" width="36" height="37" viewBox="0 0 96 96">
      <FinderArt id="fw" />
    </svg>
  </Art>
);

const Trash = () => (
  <Art>
    <defs>
      <linearGradient id="tr" x1="0" y1="0" x2="1" y2="0">
        <stop offset="0" stopColor="#b9b9b9" />
        <stop offset="0.300" stopColor="#e9e9e9" />
        <stop offset="0.700" stopColor="#dcdcdc" />
        <stop offset="1" stopColor="#a9a9a9" />
      </linearGradient>
    </defs>
    <path d="M16.500 15 Q18 24 48 24 Q78 24 79 15 L72 81 Q70 87.500 48 87.500 Q27 87.500 25 81Z" fill="url(#tr)" />
    <ellipse cx="48" cy="16" rx="31" ry="7.500" fill="#a8a8a8" stroke="#ececec" strokeWidth="1.300" />
    <path d="M19 14 L26 8 L34 9 L38 5 L44 10 L53 6 L60 11 L70 9 L75 16 L66 22 H28Z" fill="#dedede" />
    <path d="M26 9 L34 12 L30 17Z M43 9 L49 12 L44 20Z M62 10 L69 13 L63 18Z" fill="#5c5b5a" />
    <path d="M35 16 L43 13 L41 21 H36Z" fill="#5bb7c8" />
    <path d="M52 10 L61 16 L57 21 L50 19Z" fill="#3b4f80" />
    <path d="M56 17 L61 19 L58 22Z" fill="#d2743f" />
    <path d="M30 36 Q44 46 36 62 M62 34 Q50 50 62 68" stroke="#f5f5f5" strokeWidth="3" fill="none" opacity="0.600" />
  </Art>
);

function DockItem({ children, running }: { children: React.ReactNode; running?: boolean }) {
  return (
    <div className="flex h-[120px] w-24 shrink-0 flex-col items-center pt-2">
      {children}
      {running && <i className="mt-1 size-2 rounded-full bg-black" />}
    </div>
  );
}

function Dock() {
  return (
    <div className="mx-auto mt-[14px] flex h-[120px] w-[2408px] rounded-t-[12px] bg-[linear-gradient(90deg,#6d5c57,#6c5956_30%,#695957_60%,#665656)] px-2">
      <DockItem running><Art><FinderArt id="fd" /></Art></DockItem>
      <DockItem>
        <Art>
          <circle cx="48" cy="48" r="38" fill="#e6e4e8" />
          <SiriArt id="lg" />
        </Art>
      </DockItem>
      <DockItem><Launchpad /></DockItem>
      <DockItem><Safari /></DockItem>
      <DockItem running><ChromeIcon /></DockItem>
      <DockItem><Mail /></DockItem>
      <DockItem><Contacts /></DockItem>
      <DockItem><Calendar /></DockItem>
      <DockItem running><Art><NotesArt /></Art></DockItem>
      <DockItem><Reminders /></DockItem>
      <DockItem><Maps /></DockItem>
      <DockItem><Photos /></DockItem>
      <DockItem><FaceTime /></DockItem>
      <DockItem><Music /></DockItem>
      <DockItem><AppStore /></DockItem>
      <DockItem><Prefs /></DockItem>
      <i className="mx-[21px] mt-[30px] h-[60px] w-0.5 shrink-0 bg-[#3b2e2d]" />
      <DockItem running><Discord /></DockItem>
      <DockItem><Preview /></DockItem>
      <DockItem running><VSCode /></DockItem>
      <DockItem running><Terminal /></DockItem>
      <i className="mx-[21px] mt-4 h-[88px] w-0.5 shrink-0 bg-[#3b2e2d]" />
      <DockItem><Folder /></DockItem>
      <DockItem><NotesWindow /></DockItem>
      <DockItem><FinderWindow /></DockItem>
      <DockItem><Trash /></DockItem>
    </div>
  );
}

export default function App() {
  return (
    <div className="h-[1600px] w-[2560px] overflow-hidden bg-[linear-gradient(90deg,#2a1b18,#1b1110_12%,#150e0d_60%,#1d1312)] font-[Inter,sans-serif]">
      <MenuBar />
      <div className="h-0.5 bg-[#3b3a4a]" />
      <div className="relative h-[1420px] overflow-hidden rounded-[10px] border-b-2 border-[#0e4f80] bg-white">
        <TabStrip />
        <Toolbar />
        <Bookmarks />
        <Page />
        <div className="absolute inset-x-0 bottom-0 h-10 bg-gradient-to-b from-transparent to-[#30408010]" />
      </div>
      <Dock />
    </div>
  );
}
